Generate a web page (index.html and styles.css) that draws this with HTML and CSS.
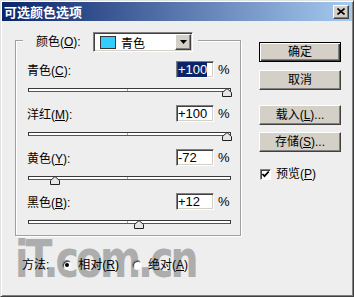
FILE: index.html
```html
<!DOCTYPE html>
<html lang="zh">
<head>
<meta charset="utf-8">
<title>可选颜色选项</title>
<link rel="stylesheet" href="styles.css">
</head>
<body>
<div class="window">
  <div class="watermark">iT.com.cn</div>
  <div class="titlebar">
    <span class="title">可选颜色选项</span>
    <span class="close"><svg width="8" height="7" viewBox="0 0 8 7"><path d="M0.5 0.5L7.5 6.5M7.5 0.5L0.5 6.5" stroke="#000" stroke-width="1.6"/></svg></span>
  </div>
  <div class="body">
    <div class="left">
      <div class="group">
        <div class="group-head">
          <span class="lbl">颜色(<u>O</u>):</span>
          <div class="select">
            <span class="swatch"></span>
            <span class="sel-text">青色</span>
            <span class="arrow"><svg width="7" height="4" viewBox="0 0 7 4"><path d="M0 0H7L3.5 4Z" fill="#000"/></svg></span>
          </div>
        </div>

        <div class="row first">
          <span class="lbl">青色(<u>C</u>):</span>
          <span class="field"><span class="hl">+100</span></span>
          <span class="pct">%</span>
        </div>
        <div class="slider">
          <div class="track"></div>
          <svg class="thumb" style="left:194px" width="10" height="9" viewBox="0 0 10 9"><path d="M0.5 8.5V4.5L5 0.5L9.5 4.5V8.5Z" fill="#e6e6e6" stroke="#222"/></svg>
        </div>

        <div class="row">
          <span class="lbl">洋红(<u>M</u>):</span>
          <span class="field">+100</span>
          <span class="pct">%</span>
        </div>
        <div class="slider">
          <div class="track"></div>
          <svg class="thumb" style="left:194px" width="10" height="9" viewBox="0 0 10 9"><path d="M0.5 8.5V4.5L5 0.5L9.5 4.5V8.5Z" fill="#e6e6e6" stroke="#222"/></svg>
        </div>

        <div class="row">
          <span class="lbl">黄色(<u>Y</u>):</span>
          <span class="field">-72</span>
          <span class="pct">%</span>
        </div>
        <div class="slider">
          <div class="track"></div>
          <svg class="thumb" style="left:22px" width="10" height="9" viewBox="0 0 10 9"><path d="M0.5 8.5V4.5L5 0.5L9.5 4.5V8.5Z" fill="#e6e6e6" stroke="#222"/></svg>
        </div>

        <div class="row">
          <span class="lbl">黑色(<u>B</u>):</span>
          <span class="field">+12</span>
          <span class="pct">%</span>
        </div>
        <div class="slider">
          <div class="track"></div>
          <svg class="thumb" style="left:106px" width="10" height="9" viewBox="0 0 10 9"><path d="M0.5 8.5V4.5L5 0.5L9.5 4.5V8.5Z" fill="#e6e6e6" stroke="#222"/></svg>
        </div>
      </div>

      <div class="method">
        <span class="lbl">方法:</span>
        <span class="radio on"></span>
        <span class="rlbl">相对(<u>R</u>)</span>
        <span class="radio"></span>
        <span class="rlbl">绝对(<u>A</u>)</span>
      </div>
    </div>

    <div class="right">
      <div class="btn default">确定</div>
      <div class="btn b2">取消</div>
      <div class="btn b3">载入(<u>L</u>)...</div>
      <div class="btn b4">存储(<u>S</u>)...</div>
      <div class="check-row">
        <span class="checkbox"><svg width="9" height="9" viewBox="0 0 9 9"><path d="M1.5 4L3.5 6.2L7.8 1.5" fill="none" stroke="#000" stroke-width="1.8"/></svg></span>
        <span class="clbl">预览(<u>P</u>)</span>
      </div>
    </div>
  </div>
</div>
</body>
</html>
```
FILE: styles.css
```css
* { box-sizing: border-box; }
html, body { margin: 0; padding: 0; }
body {
  width: 354px;
  height: 297px;
  overflow: hidden;
  background: #eeeeee;
  font-family: "Liberation Sans", "Noto Sans CJK SC", sans-serif;
  font-size: 12px;
  color: #000;
}
u { text-decoration: underline; text-underline-offset: 1px; }

.window {
  position: relative;
  width: 354px;
  height: 297px;
  background: #eeeeee;
  border: 1px solid;
  border-color: #e2e2e2 #404040 #404040 #e2e2e2;
  box-shadow: inset 1px 1px #ffffff, inset -1px -1px #808080;
  padding: 1px;
  overflow: hidden;
}

.watermark {
  position: absolute;
  left: 14px;
  top: 233px;
  z-index: 0;
  font-family: "DejaVu Sans", sans-serif;
  font-weight: bold;
  font-size: 52px;
  line-height: 50px;
  letter-spacing: -4px;
  color: #adadad;
  transform: scaleX(0.76);
  transform-origin: left top;
  white-space: nowrap;
}

.titlebar {
  height: 19px;
  display: flex;
  align-items: center;
  justify-content: space-between;
  padding: 0 3px 0 2px;
  background: linear-gradient(to right, #0a246a, #a6caf0);
}
.title {
  color: #fff;
  font-family: "Noto Sans CJK SC", sans-serif;
  font-weight: bold;
  font-size: 13px;
  line-height: 19px;
}
.close {
  width: 16px;
  height: 14px;
  display: flex;
  align-items: center;
  justify-content: center;
  background: #d4d0c8;
  border: 1px solid;
  border-color: #fff #404040 #404040 #fff;
  box-shadow: inset -1px -1px #808080;
}

.body {
  position: relative;
  z-index: 1;
  display: flex;
  padding: 19px 0 0 13px;
}
.left {
  width: 226px;
  display: flex;
  flex-direction: column;
}

.group {
  height: 196px;
  border: 1px solid #a0a0a0;
  box-shadow: inset 1px 1px #fff, 1px 1px #fff;
}
.group-head {
  width: 175px;
  height: 20px;
  margin: -9px 0 0 7px;
  padding: 0 5px 0 13px;
  display: flex;
  align-items: center;
  justify-content: space-between;
  background: #eeeeee;
}
.lbl { line-height: 14px; white-space: nowrap; }

.select {
  width: 100px;
  height: 20px;
  display: flex;
  align-items: center;
  background: #fff;
  border: 1px solid;
  border-color: #808080 #fff #fff #808080;
  box-shadow: inset 1px 1px #404040, inset -1px -1px #d4d0c8;
  padding: 2px 1px 2px 6px;
}
.swatch {
  width: 16px;
  height: 13px;
  background: #33ccff;
  border: 1px solid #333;
}
.sel-text { margin-left: 5px; flex: 1; }
.arrow {
  width: 16px;
  height: 16px;
  display: flex;
  align-items: center;
  justify-content: center;
  background: #d4d0c8;
  border: 1px solid;
  border-color: #fff #404040 #404040 #fff;
  box-shadow: inset -1px -1px #808080;
}

.row {
  display: flex;
  align-items: flex-end;
  height: 17px;
  margin: 8px 8px 0 11px;
}
.row.first { margin-top: 9px; }
.field {
  width: 38px;
  height: 17px;
  margin-left: auto;
  display: flex;
  align-items: center;
  background: #fff;
  border: 1px solid;
  border-color: #808080 #fff #fff #808080;
  box-shadow: inset 1px 1px #404040, inset -1px -1px #d4d0c8;
  padding: 0 0 0 1px;
  font-size: 13px;
  line-height: 15px;
}
.hl { background: #0a246a; color: #fff; }
.pct {
  align-self: center;
  width: 14px;
  margin-left: 4px;
  font-size: 13px;
  line-height: 15px;
}

.slider {
  position: relative;
  width: 203px;
  height: 9px;
  margin: 10px 0 0 12px;
}
.track {
  position: relative;
  height: 4px;
  margin-top: 4px;
  background: #fff;
  border: 1px solid #3a3a3a;
  border-bottom-color: #555;
}
.track::after {
  content: "";
  position: absolute;
  left: 98px;
  top: 0;
  width: 1px;
  height: 2px;
  background: #a8a8a8;
}
.thumb { position: absolute; top: 0; }

.method {
  display: flex;
  align-items: center;
  height: 14px;
  margin: 22px 0 0 7px;
}
.radio {
  width: 10px;
  height: 10px;
  border-radius: 50%;
  background: #fff;
  border: 1px solid;
  border-color: #808080 #f4f4f4 #f4f4f4 #808080;
  box-shadow: inset 1px 1px #404040;
  display: flex;
  align-items: center;
  justify-content: center;
}
.method .radio { margin-left: 13px; }
.radio.on::after {
  content: "";
  width: 4px;
  height: 4px;
  border-radius: 50%;
  background: #000;
}
.rlbl { margin-left: 6px; line-height: 14px; }

.right {
  width: 82px;
  margin-left: 18px;
  padding-top: 2px;
  display: flex;
  flex-direction: column;
}
.btn {
  width: 82px;
  height: 20px;
  display: flex;
  align-items: center;
  justify-content: center;
  background: #d4d0c8;
  border: 1px solid;
  border-color: #fff #404040 #404040 #fff;
  box-shadow: inset -1px -1px #808080;
  line-height: 14px;
}
.btn.default {
  border-color: #000;
  box-shadow: inset 1px 1px #fff, inset -1px -1px #404040, inset -2px -2px #808080;
}
.btn.b2 { margin-top: 8px; }
.btn.b3 { margin-top: 15px; }
.btn.b4 { margin-top: 7px; }

.check-row {
  display: flex;
  align-items: center;
  margin-top: 15px;
  padding-left: 1px;
}
.checkbox {
  width: 11px;
  height: 11px;
  display: flex;
  align-items: center;
  justify-content: center;
  background: #fff;
  border: 1px solid;
  border-color: #808080 #fff #fff #808080;
  box-shadow: inset 1px 1px #404040;
}
.clbl { margin-left: 5px; line-height: 14px; }
```
